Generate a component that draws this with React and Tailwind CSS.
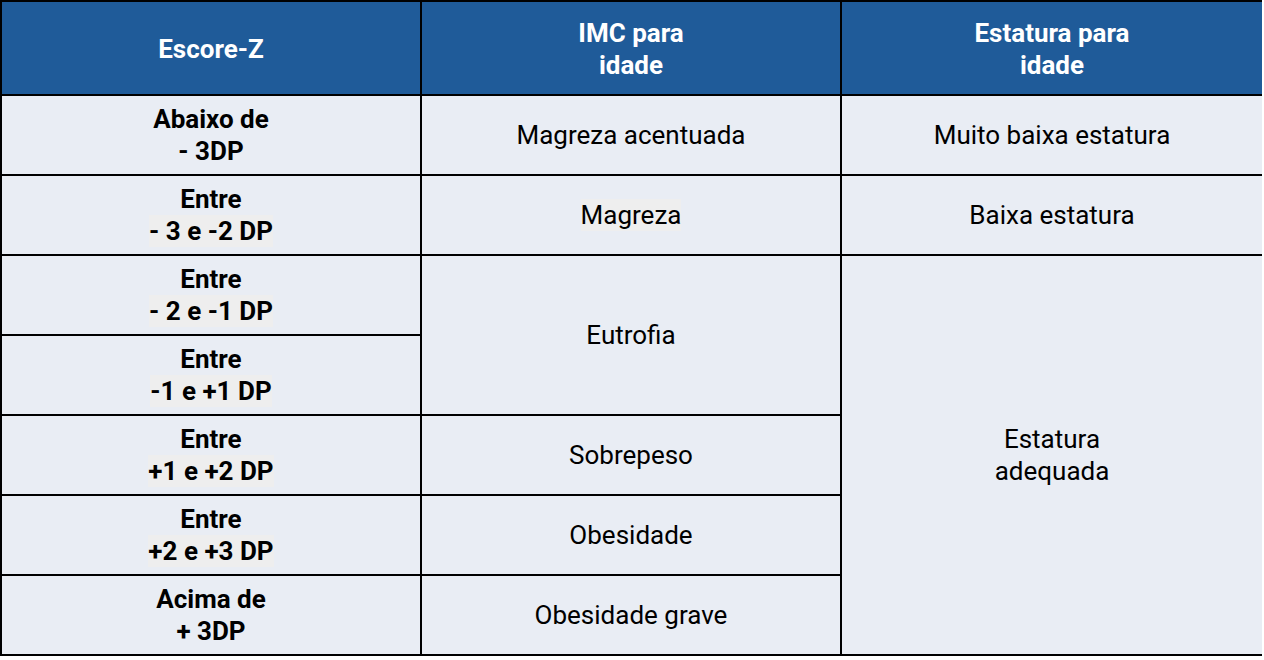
export default function App() {
  const hl = "bg-[#eeeeee]";
  const cell = "bg-[#e9edf4] flex flex-col items-center justify-center text-center text-black leading-[32px]";
  const head = "bg-[#1f5b99] flex flex-col items-center justify-center pt-[1px] text-center text-white font-bold leading-[32px]";

  return (
    <div className="bg-white w-[1264px] h-[660px]" style={{ fontFamily: "Roboto, 'Liberation Sans', sans-serif" }}>
      <div className="w-[1262px] bg-black p-[2px] grid grid-cols-[418px_418px_420px] grid-rows-[92px_repeat(7,78px)] gap-[2px] text-[26px]">
        {/* header */}
        <div className={head}>Escore-Z</div>
        <div className={head}>
          <span>IMC para</span>
          <span>idade</span>
        </div>
        <div className={head}>
          <span>Estatura para</span>
          <span>idade</span>
        </div>

        {/* row 1 */}
        <div className={cell + " font-bold"}>
          <span>Abaixo de</span>
          <span>- 3DP</span>
        </div>
        <div className={cell}>Magreza acentuada</div>
        <div className={cell}>Muito baixa estatura</div>

        {/* row 2 */}
        <div className={cell + " font-bold"}>
          <span>Entre</span>
          <span className={hl}>- 3 e -2 DP</span>
        </div>
        <div className={cell}>
          <span className={hl}>Magreza</span>
        </div>
        <div className={cell}>Baixa estatura</div>

        {/* row 3 */}
        <div className={cell + " font-bold"}>
          <span>Entre</span>
          <span className={hl}>- 2 e -1 DP</span>
        </div>
        <div className={cell + " row-span-2"}>Eutrofia</div>
        <div className={cell + " row-span-5"}>
          <span>Estatura</span>
          <span>adequada</span>
        </div>

        {/* row 4 */}
        <div className={cell + " font-bold"}>
          <span>Entre</span>
          <span className={hl}>-1 e +1 DP</span>
        </div>

        {/* row 5 */}
        <div className={cell + " font-bold"}>
          <span>Entre</span>
          <span className={hl}>+1 e +2 DP</span>
        </div>
        <div className={cell}>Sobrepeso</div>

        {/* row 6 */}
        <div className={cell + " font-bold"}>
          <span>Entre</span>
          <span className={hl}>+2 e +3 DP</span>
        </div>
        <div className={cell}>Obesidade</div>

        {/* row 7 */}
        <div className={cell + " font-bold"}>
          <span>Acima de</span>
          <span>+ 3DP</span>
        </div>
        <div className={cell}>Obesidade grave</div>
      </div>
    </div>
  );
}
